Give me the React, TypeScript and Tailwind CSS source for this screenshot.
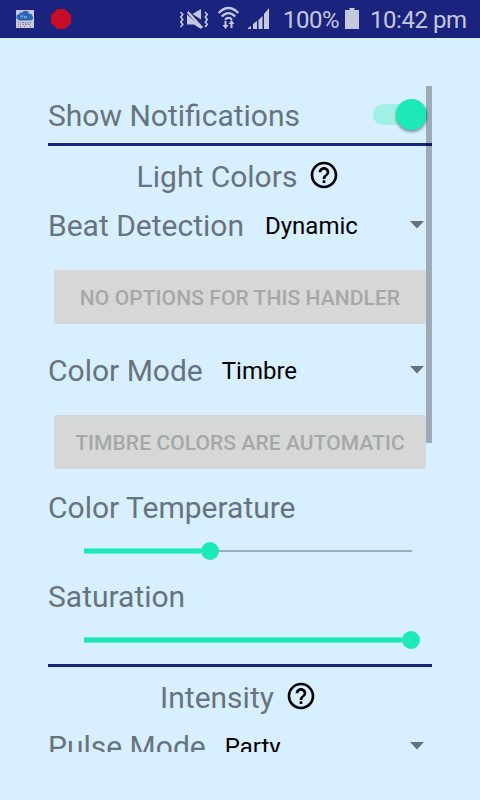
import React from "react";

function HelpIcon() {
  return (
    <svg viewBox="0 0 24 24" className="h-8 w-8 shrink-0" fill="#000">
      <path d="M11 18h2v-2h-2v2zm1-16C6.48 2 2 6.48 2 12s4.480 10 10 10 10-4.480 10-10S17.520 2 12 2zm0 18c-4.410 0-8-3.590-8-8s3.590-8 8-8 8 3.590 8 8-3.590 8-8 8zm0-14c-2.210 0-4 1.790-4 4h2c0-1.100.9-2 2-2s2 .9 2 2c0 2-3 1.750-3 5h2c0-2.250 3-2.500 3-5 0-2.210-1.790-4-4-4z" />
    </svg>
  );
}

function StatusBar() {
  return (
    <header className="flex h-[38px] shrink-0 items-start bg-[#1a237e] text-[#c5c8df]">
      <svg className="h-[38px] w-[280px] shrink-0" viewBox="0 0 280 38" fill="#c5c8df">
        <rect x="16" y="10" width="18" height="18" />
        <path d="M16.500 18.500v-3l2-1 2-2h2l1-1.500h4l2 3h2l1.500 3v2l-2 1.500h-12z" fill="#2c68b8" />
        <path d="M20.500 15.500h3v1h-1v1.500h-1v-1.500h-1zM24 16h1.500v2h-1.500zM26 16h1v2h-1z" fill="#7fa4d5" />
        <g fill="#b25c72">
          <path d="M18 22h1v1h-1zM22 22h2v1h-2zM27 22h1v1h-1zM30 22h1v1h-1zM23 24h1v1h-1zM26 24h1v1h-1zM20 26h1v1h-1zM24 26h1v1h-1zM30 26h1v1h-1z" />
        </g>
        <path d="M18 24h1v1h-1zM20 23h1v2h-1zM25 22h1v3h-1zM29 24h1v1h-1zM18 26h1v1h-1zM28 23h1v2h-1z" fill="#7f96a8" />
        <path d="M57.500 9h7.500l6 6v8l-6 6h-7.500l-6.500-6v-8z" fill="#c60c26" />
        <g fill="none" stroke="#c5c8df" strokeWidth="1.600">
          <path d="M180.500 12l2.300 2.500-2 2.500 2 2.500-2 2.500 2 2.500-2.300 2.500" />
          <path d="M205 12l2.300 2.500-2 2.500 2 2.500-2 2.500 2 2.500-2.300 2.500" />
        </g>
        <path d="M201 9v10.500l-8.500-5.500zM187 13l1.500-2 14.500 16-1.500 1.500zM187 14.500l14 12.500v2l-7-4.500h-7z" />
        <g fill="none" stroke="#c5c8df" strokeWidth="2.300">
          <path d="M218.700 13Q228.500 3 238.300 13M221.800 16.500Q228.500 9.800 235.200 16.500M225 19.700Q228.500 16 232 19.700" />
        </g>
        <path d="M224.500 21h2v4h2l-3 4-3-4h2zM230.500 28h2v-4h2l-3-4-3 4h2z" />
        <path d="M248 29v-1l3-2v3zM253 29v-5l4-3v8zM258.500 29v-9l4-4v13zM264 29v-15l5-6v21z" />
      </svg>
      <span className="w-[64px] shrink-0 pl-[3px] text-[24px] leading-[40px] tracking-[-0.5px] whitespace-nowrap">100%</span>
      <svg className="h-[38px] w-[26px] shrink-0" viewBox="0 0 26 38" fill="#c5c8df">
        <path d="M1 10h4.500v-2h5v2h4.500v19H1z" />
      </svg>
      <span className="text-[24px] leading-[40px] tracking-[-0.45px] whitespace-nowrap">10:42 pm</span>
    </header>
  );
}

function Divider() {
  return <div className="h-[3px] shrink-0 bg-[#1a237e]" />;
}

function Heading({ title }: { title: string }) {
  return (
    <div className="flex h-[60px] shrink-0 items-start justify-center pt-[11px] pr-[3px]">
      <h2 className="mr-[11px]">{title}</h2>
      <div className="pt-[2px]">
        <HelpIcon />
      </div>
    </div>
  );
}

function Spinner({ label, value, gap = "ml-[19px]" }: { label: string; value: string; gap?: string }) {
  return (
    <div className="flex h-10 shrink-0 items-start pr-2">
      <span>{label}</span>
      <span className={`${gap} flex-1 text-[24px] text-black`}>{value}</span>
      <svg viewBox="0 0 14 8" className="mt-[15px] h-2 w-[14px]" fill="#66727a">
        <path d="M0 0h14L7 7.500z" />
      </svg>
    </div>
  );
}

function DisabledButton({ label }: { label: string }) {
  return (
    <button
      disabled
      className="mx-[6px] mt-6 mb-[27px] h-[54px] shrink-0 rounded-[3px] bg-[#d6d7d7] text-[21px] leading-[56px] font-medium tracking-[0.08px] whitespace-nowrap text-[#a6a8a8]"
    >
      {label}
    </button>
  );
}

function SeekBar({ percent }: { percent: number }) {
  return (
    <div className="mr-5 ml-9 flex h-[18px] shrink-0 items-center">
      <div className="box-content h-[4px] border-y border-[#1de9b6]/60 bg-[#1de9b6] bg-clip-padding" style={{ width: `calc(${percent}% - 9px)` }} />
      <div className="relative z-10 -mr-2 h-[18px] w-[18px] shrink-0 rounded-full bg-[#1de9b6]" />
      <div className="h-[2px] min-w-0 flex-1 bg-[#9bacb8]" />
    </div>
  );
}

export default function App() {
  return (
    <div className="flex h-[800px] w-[480px] flex-col overflow-hidden bg-[#d7efff] font-[Roboto,sans-serif]">
      <StatusBar />
      <main className="relative mx-12 mt-12 flex h-[666px] shrink-0 flex-col overflow-hidden text-[30px] leading-[40px] text-[#68747b]">
        <div className="flex h-[57px] shrink-0 items-start justify-between pt-[10px]">
          <span>Show Notifications</span>
          <div className="mt-2 mr-[7px] flex h-[21px] w-[52px] items-center justify-end rounded-full bg-[#9ff0e6]">
            <div className="-mr-[2px] h-[31px] w-[31px] shrink-0 rounded-full bg-[#1de9b6] shadow-[0_2px_3px_rgba(0,0,0,0.4)]" />
          </div>
        </div>
        <Divider />
        <Heading title="Light Colors" />
        <Spinner label="Beat Detection" value="Dynamic" gap="ml-[21px]" />
        <DisabledButton label="NO OPTIONS FOR THIS HANDLER" />
        <Spinner label="Color Mode" value="Timbre" />
        <DisabledButton label="TIMBRE COLORS ARE AUTOMATIC" />
        <div className="-mt-2 mb-[14px] shrink-0">Color Temperature</div>
        <SeekBar percent={38.4} />
        <div className="mt-[17px] mb-[14px] shrink-0">Saturation</div>
        <SeekBar percent={99.7} />
        <div className="h-[15px] shrink-0" />
        <Divider />
        <Heading title="Intensity" />
        <Spinner label="Pulse Mode" value="Party" />
        <div className="absolute top-0 right-0 z-20 h-[357px] w-[6px] bg-black/28" />
      </main>
    </div>
  );
}
